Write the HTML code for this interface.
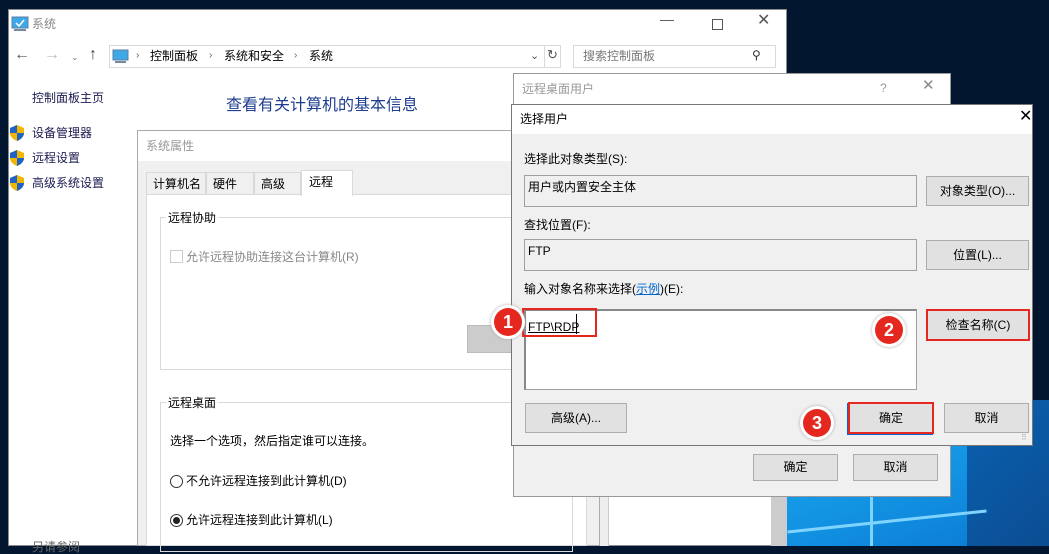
<!DOCTYPE html>
<html><head><meta charset="utf-8"><style>
*{box-sizing:border-box;margin:0;padding:0}
body{width:1049px;height:546px;overflow:hidden;background:#021630;position:relative;font-family:"Liberation Sans","Noto Sans CJK SC",sans-serif;font-size:12px;color:#000}
.a{position:absolute}
.t{position:absolute;white-space:nowrap;line-height:14px}
.btn{position:absolute;background:#e1e1e1;border:1px solid #adadad;text-align:center;font-size:12px}
.shield{position:absolute;width:14px;height:16px}
</style></head><body>
<!-- desktop blue -->
<div class="a" style="left:787px;top:400px;width:262px;height:146px;background:linear-gradient(135deg,#0a3f7a,#0a5fae 50%,#0b4d92)"></div>
<div class="a" style="left:787px;top:440px;width:180px;height:106px;background:linear-gradient(160deg,#19a9f0,#0d7fd6)"></div>
<div class="a" style="left:870px;top:440px;width:3px;height:106px;background:#7fd3ff"></div>
<div class="a" style="left:787px;top:520px;width:200px;height:3px;background:#7fd3ff;transform:rotate(-6deg)"></div>

<!-- main window -->
<div class="a" style="left:8px;top:9px;width:779px;height:537px;background:#fff;border:1px solid #8a8a8a"></div>
<svg class="a" style="left:11px;top:16px" width="18" height="16"><rect x="1" y="1" width="16" height="11" fill="#3fa9e8" stroke="#5b7fa0"/><path d="M5 7l3 3 5-6" stroke="#fff" stroke-width="1.5" fill="none"/><rect x="3" y="13" width="12" height="2" fill="#7a8a9a"/></svg>
<div class="t" style="left:32px;top:17px;color:#888">系统</div>
<div class="t" style="left:660px;top:12px;color:#555;font-size:14px">—</div>
<div class="a" style="left:712px;top:19px;width:11px;height:11px;border:1px solid #555"></div>
<div class="t" style="left:757px;top:14px;color:#555;font-size:16px">✕</div>
<!-- nav -->
<div class="t" style="left:14px;top:48px;color:#555;font-size:16px">←</div>
<div class="t" style="left:44px;top:48px;color:#bbb;font-size:16px">→</div>
<div class="t" style="left:71px;top:50px;color:#777;font-size:9px">⌄</div>
<div class="t" style="left:89px;top:48px;color:#444;font-size:16px">↑</div>
<div class="a" style="left:109px;top:45px;width:436px;height:23px;border:1px solid #d9d9d9"></div>
<div class="a" style="left:544px;top:45px;width:17px;height:23px;border:1px solid #d9d9d9"></div>
<svg class="a" style="left:112px;top:49px" width="17" height="15"><rect x="1" y="1" width="15" height="10" fill="#3fa9e8" stroke="#5b7fa0"/><rect x="3" y="12" width="11" height="2" fill="#7a8a9a"/></svg>
<div class="t" style="left:136px;top:49px;color:#666;font-size:10px">›</div>
<div class="t" style="left:150px;top:49px">控制面板</div>
<div class="t" style="left:209px;top:49px;color:#666;font-size:10px">›</div>
<div class="t" style="left:224px;top:49px">系统和安全</div>
<div class="t" style="left:294px;top:49px;color:#666;font-size:10px">›</div>
<div class="t" style="left:309px;top:49px">系统</div>
<div class="t" style="left:530px;top:49px;color:#555;font-size:11px">⌄</div>
<div class="t" style="left:547px;top:48px;color:#555;font-size:13px">↻</div>
<div class="a" style="left:573px;top:45px;width:203px;height:23px;border:1px solid #d9d9d9"></div>
<div class="t" style="left:583px;top:49px;color:#777">搜索控制面板</div>
<div class="t" style="left:752px;top:48px;color:#333;font-size:12px">⚲</div>
<!-- left pane -->
<div class="t" style="left:32px;top:91px;color:#1a1a50">控制面板主页</div>
<svg class="shield" style="left:10px;top:125px"><path d="M7 0L14 3V8C14 12 10 15 7 16 4 15 0 12 0 8V3Z" fill="#f2b500"/><path d="M7 0V8H0V3ZM7 8H14V8C14 12 10 15 7 16Z" fill="#1f63c6"/></svg>
<svg class="shield" style="left:10px;top:150px"><path d="M7 0L14 3V8C14 12 10 15 7 16 4 15 0 12 0 8V3Z" fill="#f2b500"/><path d="M7 0V8H0V3ZM7 8H14V8C14 12 10 15 7 16Z" fill="#1f63c6"/></svg>
<svg class="shield" style="left:10px;top:175px"><path d="M7 0L14 3V8C14 12 10 15 7 16 4 15 0 12 0 8V3Z" fill="#f2b500"/><path d="M7 0V8H0V3ZM7 8H14V8C14 12 10 15 7 16Z" fill="#1f63c6"/></svg>
<div class="t" style="left:32px;top:126px;color:#1a1a50">设备管理器</div>
<div class="t" style="left:32px;top:151px;color:#1a1a50">远程设置</div>
<div class="t" style="left:32px;top:176px;color:#1a1a50">高级系统设置</div>
<div class="t" style="left:32px;top:540px;color:#666">另请参阅</div>
<div class="t" style="left:226px;top:96px;color:#1e3d8f;font-size:16px;line-height:20px">查看有关计算机的基本信息</div>
<!-- right strips of main -->
<div class="a" style="left:599px;top:400px;width:10px;height:146px;background:#eee;border-left:1px solid #ccc;border-right:1px solid #ccc"></div>
<div class="a" style="left:771px;top:400px;width:16px;height:146px;background:#ccc"></div>

<!-- 系统属性 -->
<div class="a" style="left:137px;top:130px;width:463px;height:416px;background:#f0f0f0;border:1px solid #aaa"></div>
<div class="a" style="left:138px;top:131px;width:461px;height:30px;background:#fff"></div>
<div class="t" style="left:146px;top:139px;color:#999">系统属性</div>
<div class="a" style="left:146px;top:194px;width:441px;height:352px;background:#fff;border:1px solid #d9d9d9"></div>
<div class="a" style="left:146px;top:172px;width:60px;height:23px;border:1px solid #d9d9d9;background:#f0f0f0"></div>
<div class="a" style="left:206px;top:172px;width:48px;height:23px;border:1px solid #d9d9d9;background:#f0f0f0"></div>
<div class="a" style="left:254px;top:172px;width:47px;height:23px;border:1px solid #d9d9d9;background:#f0f0f0"></div>
<div class="a" style="left:301px;top:170px;width:52px;height:26px;border:1px solid #d9d9d9;border-bottom:none;background:#fff"></div>
<div class="t" style="left:153px;top:177px">计算机名</div>
<div class="t" style="left:213px;top:177px">硬件</div>
<div class="t" style="left:261px;top:177px">高级</div>
<div class="t" style="left:309px;top:175px">远程</div>
<div class="a" style="left:160px;top:217px;width:413px;height:153px;border:1px solid #d9d9d9"></div>
<div class="t" style="left:166px;top:211px;background:#fff;padding:0 2px">远程协助</div>
<div class="a" style="left:170px;top:250px;width:13px;height:13px;border:1px solid #ccc"></div>
<div class="t" style="left:186px;top:250px;color:#888">允许远程协助连接这台计算机(R)</div>
<div class="a" style="left:467px;top:325px;width:60px;height:28px;background:#ccc;border:1px solid #bbb"></div>
<div class="a" style="left:160px;top:402px;width:413px;height:150px;border:1px solid #d9d9d9"></div>
<div class="t" style="left:166px;top:396px;background:#fff;padding:0 2px">远程桌面</div>
<div class="t" style="left:170px;top:434px">选择一个选项，然后指定谁可以连接。</div>
<div class="a" style="left:170px;top:475px;width:13px;height:13px;border:1px solid #333;border-radius:50%"></div>
<div class="t" style="left:186px;top:474px">不允许远程连接到此计算机(D)</div>
<div class="a" style="left:170px;top:514px;width:13px;height:13px;border:1px solid #333;border-radius:50%"></div>
<div class="a" style="left:173px;top:517px;width:7px;height:7px;background:#222;border-radius:50%"></div>
<div class="t" style="left:186px;top:513px">允许远程连接到此计算机(L)</div>

<!-- 远程桌面用户 -->
<div class="a" style="left:513px;top:73px;width:438px;height:424px;background:#f0f0f0;border:1px solid #999"></div>
<div class="a" style="left:514px;top:74px;width:436px;height:30px;background:#fff"></div>
<div class="t" style="left:522px;top:82px;color:#999">远程桌面用户</div>
<div class="t" style="left:880px;top:81px;color:#999">?</div>
<div class="t" style="left:922px;top:79px;color:#888;font-size:15px">✕</div>
<div class="btn" style="left:753px;top:454px;width:85px;height:27px;line-height:25px">确定</div>
<div class="btn" style="left:853px;top:454px;width:85px;height:27px;line-height:25px">取消</div>

<!-- 选择用户 -->
<div class="a" style="left:511px;top:104px;width:522px;height:342px;background:#f0f0f0;border:1px solid #777"></div>
<div class="a" style="left:512px;top:105px;width:520px;height:29px;background:#fff"></div>
<div class="t" style="left:520px;top:112px">选择用户</div>
<div class="t" style="left:1019px;top:110px;font-size:16px">✕</div>
<div class="t" style="left:524px;top:152px">选择此对象类型(S):</div>
<div class="a" style="left:524px;top:175px;width:393px;height:32px;border:1px solid #a0a0a0;background:#f0f0f0"></div>
<div class="t" style="left:528px;top:180px">用户或内置安全主体</div>
<div class="btn" style="left:926px;top:176px;width:103px;height:30px;line-height:28px">对象类型(O)...</div>
<div class="t" style="left:524px;top:218px">查找位置(F):</div>
<div class="a" style="left:524px;top:239px;width:393px;height:32px;border:1px solid #a0a0a0;background:#f0f0f0"></div>
<div class="t" style="left:528px;top:244px">FTP</div>
<div class="btn" style="left:926px;top:240px;width:103px;height:30px;line-height:28px">位置(L)...</div>
<div class="t" style="left:524px;top:282px">输入对象名称来选择(<span style="color:#0066cc;text-decoration:underline">示例</span>)(E):</div>
<div class="a" style="left:524px;top:309px;width:393px;height:81px;border:1px solid #a0a0a0;border-top:2px solid #888;border-left:2px solid #888;background:#fff"></div>
<div class="t" style="left:528px;top:320px;text-decoration:underline">FTP\RDP</div>
<div class="a" style="left:576px;top:314px;width:1px;height:20px;background:#000"></div>
<div class="a" style="left:522px;top:308px;width:75px;height:29px;border:2px solid #e5281f"></div>
<div class="btn" style="left:926px;top:309px;width:104px;height:32px;line-height:28px;border:2px solid #e5281f">检查名称(C)</div>
<div class="btn" style="left:525px;top:403px;width:102px;height:30px;line-height:28px">高级(A)...</div>
<div class="btn" style="left:848px;top:402px;width:86px;height:32px;line-height:28px;border:2px solid #e5281f;box-shadow:-1px 1px 0 #0a64d6">确定</div>
<div class="btn" style="left:944px;top:403px;width:85px;height:30px;line-height:28px">取消</div>
<div class="t" style="left:1021px;top:431px;color:#aaa;font-size:8px">⠿</div>

<!-- callouts -->
<div class="a" style="left:491px;top:305px;width:34px;height:34px;border-radius:50%;background:#fff;box-shadow:0 0 3px #aaa"></div>
<div class="a" style="left:494px;top:308px;width:28px;height:28px;border-radius:50%;background:#e5281f;color:#fff;font-weight:bold;font-size:18px;text-align:center;line-height:28px">1</div>
<div class="a" style="left:872px;top:313px;width:34px;height:34px;border-radius:50%;background:#fff;box-shadow:0 0 3px #aaa"></div>
<div class="a" style="left:875px;top:316px;width:28px;height:28px;border-radius:50%;background:#e5281f;color:#fff;font-weight:bold;font-size:18px;text-align:center;line-height:28px">2</div>
<div class="a" style="left:800px;top:406px;width:34px;height:34px;border-radius:50%;background:#fff;box-shadow:0 0 3px #aaa"></div>
<div class="a" style="left:803px;top:409px;width:28px;height:28px;border-radius:50%;background:#e5281f;color:#fff;font-weight:bold;font-size:18px;text-align:center;line-height:28px">3</div>
</body></html>
